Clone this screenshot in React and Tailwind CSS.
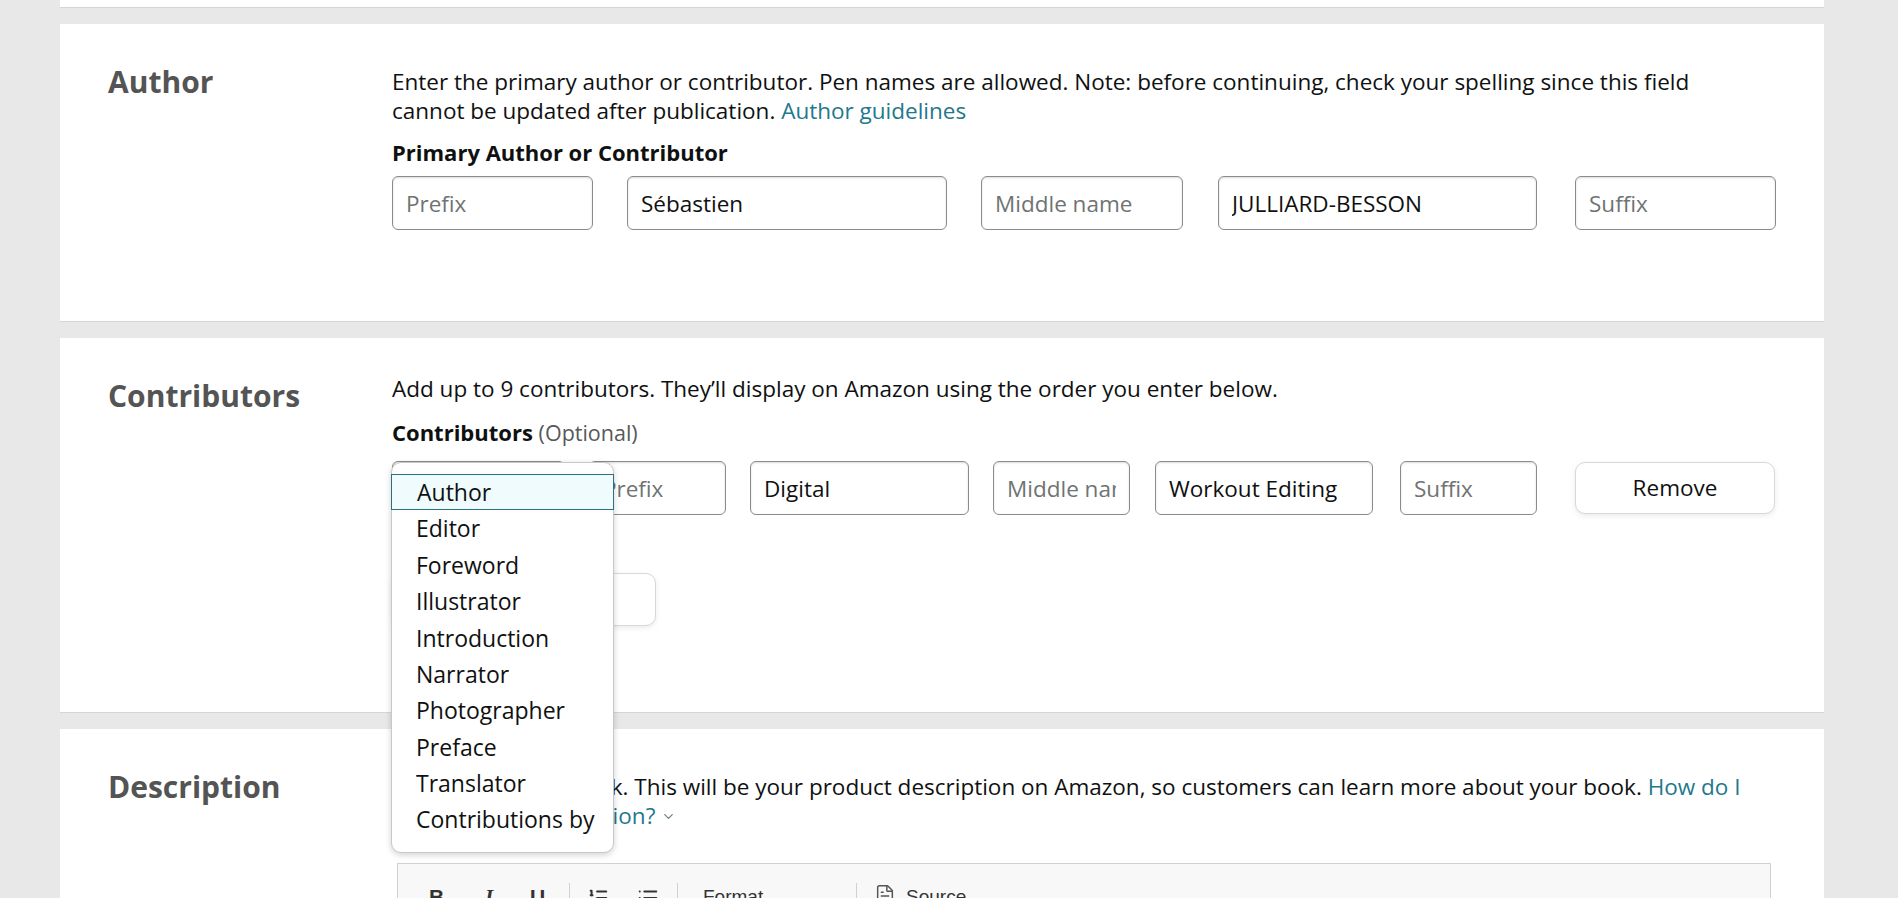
import { ChevronDown, List, ListOrdered, FileText } from 'lucide-react';

const roles = [
  'Author',
  'Editor',
  'Foreword',
  'Illustrator',
  'Introduction',
  'Narrator',
  'Photographer',
  'Preface',
  'Translator',
  'Contributions by',
];

const Field = ({ value, placeholder, className = '' }) => (
  <input
    readOnly
    defaultValue={value}
    placeholder={placeholder}
    className={`h-[54px] shrink-0 rounded-[6px] border border-[#888c8c] bg-white px-[13px] text-[22.5px] text-[#0f1111] placeholder:text-[#6f7373] shadow-[inset_0_1px_2px_rgba(15,17,17,0.15)] outline-none font-['Open_Sans',sans-serif] ${className}`}
  />
);

const Section = ({ title, titleClass = '', className = '', children }) => (
  <section className={`flex bg-white border-b border-[#d5d5d5] px-12 ${className}`}>
    <h2 className={`w-[284px] shrink-0 text-[30px] leading-[29px] font-bold text-[#545454] ${titleClass}`}>{title}</h2>
    <div className="flex-1 min-w-0">{children}</div>
  </section>
);

const Sep = ({ className = '' }) => <div className={`w-px h-[40px] -mt-[4px] bg-[#d1d1d1] ${className}`}></div>;

export default function App() {
  return (
    <div className="min-h-screen bg-[#e8e8e8] font-['Open_Sans',sans-serif] text-[#0f1111] overflow-hidden">
      <div className="ml-[60px] w-[1764px] flex flex-col gap-4">
        {/* bottom of the previous card */}
        <div className="h-[8px] bg-white border-b border-[#d5d5d5]"></div>

        <Section title="Author" className="pt-[43px] pb-[91px]">
          <p className="max-w-[1362px] text-[22.5px] leading-[29px]">
            Enter the primary author or contributor. Pen names are allowed. Note: before continuing, check your spelling since this field cannot be updated after publication.{' '}
            <a className="text-[#22788c]">Author guidelines</a>
          </p>
          <div className="mt-[13px] text-[22px] leading-[29px] font-bold">Primary Author or Contributor</div>
          <div className="mt-[9px] flex">
            <Field placeholder="Prefix" className="w-[201px]" />
            <Field value="Sébastien" className="w-[320px] ml-[34px]" />
            <Field placeholder="Middle name" className="w-[202px] ml-[34px]" />
            <Field value="JULLIARD-BESSON" className="w-[319px] ml-[35px]" />
            <Field placeholder="Suffix" className="w-[201px] ml-[38px]" />
          </div>
        </Section>

        <Section title="Contributors" titleClass="mt-[7px]" className="pt-[36px] pb-[86px]">
          <p className="text-[22.5px] leading-[29px]">Add up to 9 contributors. They’ll display on Amazon using the order you enter below.</p>
          <div className="mt-[15px] text-[22px] leading-[29px]">
            <span className="font-bold">Contributors</span>{' '}
            <span className="text-[21.5px] text-[#565959]">(Optional)</span>
          </div>
          <div className="mt-[14px] flex items-start">
            <div className="relative w-[173px] shrink-0">
              <div className="h-[54px] rounded-[6px] border border-[#888c8c] bg-[#f0f2f2]"></div>
              <div className="absolute left-[-1px] top-px z-50 w-[223px] rounded-[10px] border border-[#c8c8c8] bg-white pt-[11px] pb-[14px] shadow-[0_2px_6px_rgba(0,0,0,0.18)]">
                {roles.map((r, i) => (
                  <div
                    key={r}
                    className={
                      i === 0
                        ? 'h-[36.4px] -mx-px flex items-center pl-[25px] text-[23px] border border-[#2b6f80] bg-[#effbfd]'
                        : 'h-[36.4px] flex items-center pl-[24px] text-[23px]'
                    }
                  >
                    {r}
                  </div>
                ))}
              </div>
            </div>
            <Field placeholder="Prefix" className="w-[137px] ml-[24px]" />
            <Field value="Digital" className="w-[219px] ml-[24px]" />
            <Field placeholder="Middle name" className="w-[137px] ml-[24px]" />
            <Field value="Workout Editing" className="w-[218px] ml-[25px]" />
            <Field placeholder="Suffix" className="w-[137px] ml-[27px]" />
            <button className="mt-px ml-[38px] h-[52px] w-[200px] rounded-[10px] border border-[#d5d9d9] bg-white text-[22.5px] shadow-[0_2px_5px_0_rgba(213,217,217,0.5)]">
              Remove
            </button>
          </div>
          <button className="mt-[58px] h-[53px] w-[264px] rounded-[10px] border border-[#d5d9d9] bg-white text-[22.5px] shadow-[0_2px_5px_0_rgba(213,217,217,0.5)]">
            Add another
          </button>
        </Section>

        <Section title="Description" className="pt-[43px] pb-[60px]">
          <p className="max-w-[1362px] text-[22.5px] leading-[29px]">
            Summarize your book. This will be your product description on Amazon, so customers can learn more about your book.{' '}
            <a className="text-[#22788c]">
              How do I write a good description?
              <ChevronDown className="inline-block ml-[6px] -mt-[2px] text-[#6b7f86]" size={15} strokeWidth={2} />
            </a>
          </p>
          <div className="mx-[5px] mt-[33px] h-[90px] border border-[#d1d1d1] bg-[#f8f8f8]">
            <div className="flex items-start pt-[23px] pl-[31px] text-[#333] font-['Liberation_Sans',Arial,sans-serif] leading-[20px]">
              <span className="w-[56px] text-[21px] font-bold">B</span>
              <span className="w-[45px] text-[21px] font-bold italic font-['Liberation_Serif',serif]">I</span>
              <span className="w-[39px] text-[21px] font-bold">U</span>
              <Sep />
              <span className="ml-[17px] w-[50px]"><ListOrdered size={22} strokeWidth={2.2} /></span>
              <span className="w-[40px]"><List size={22} strokeWidth={2.2} /></span>
              <Sep />
              <span className="ml-[25px] w-[153px] text-[19px]">Format</span>
              <Sep />
              <span className="ml-[17px] -mt-[3px] w-[32px] text-[#555]"><FileText size={22} strokeWidth={1.6} /></span>
              <span className="text-[19px]">Source</span>
            </div>
          </div>
        </Section>
      </div>
    </div>
  );
}
